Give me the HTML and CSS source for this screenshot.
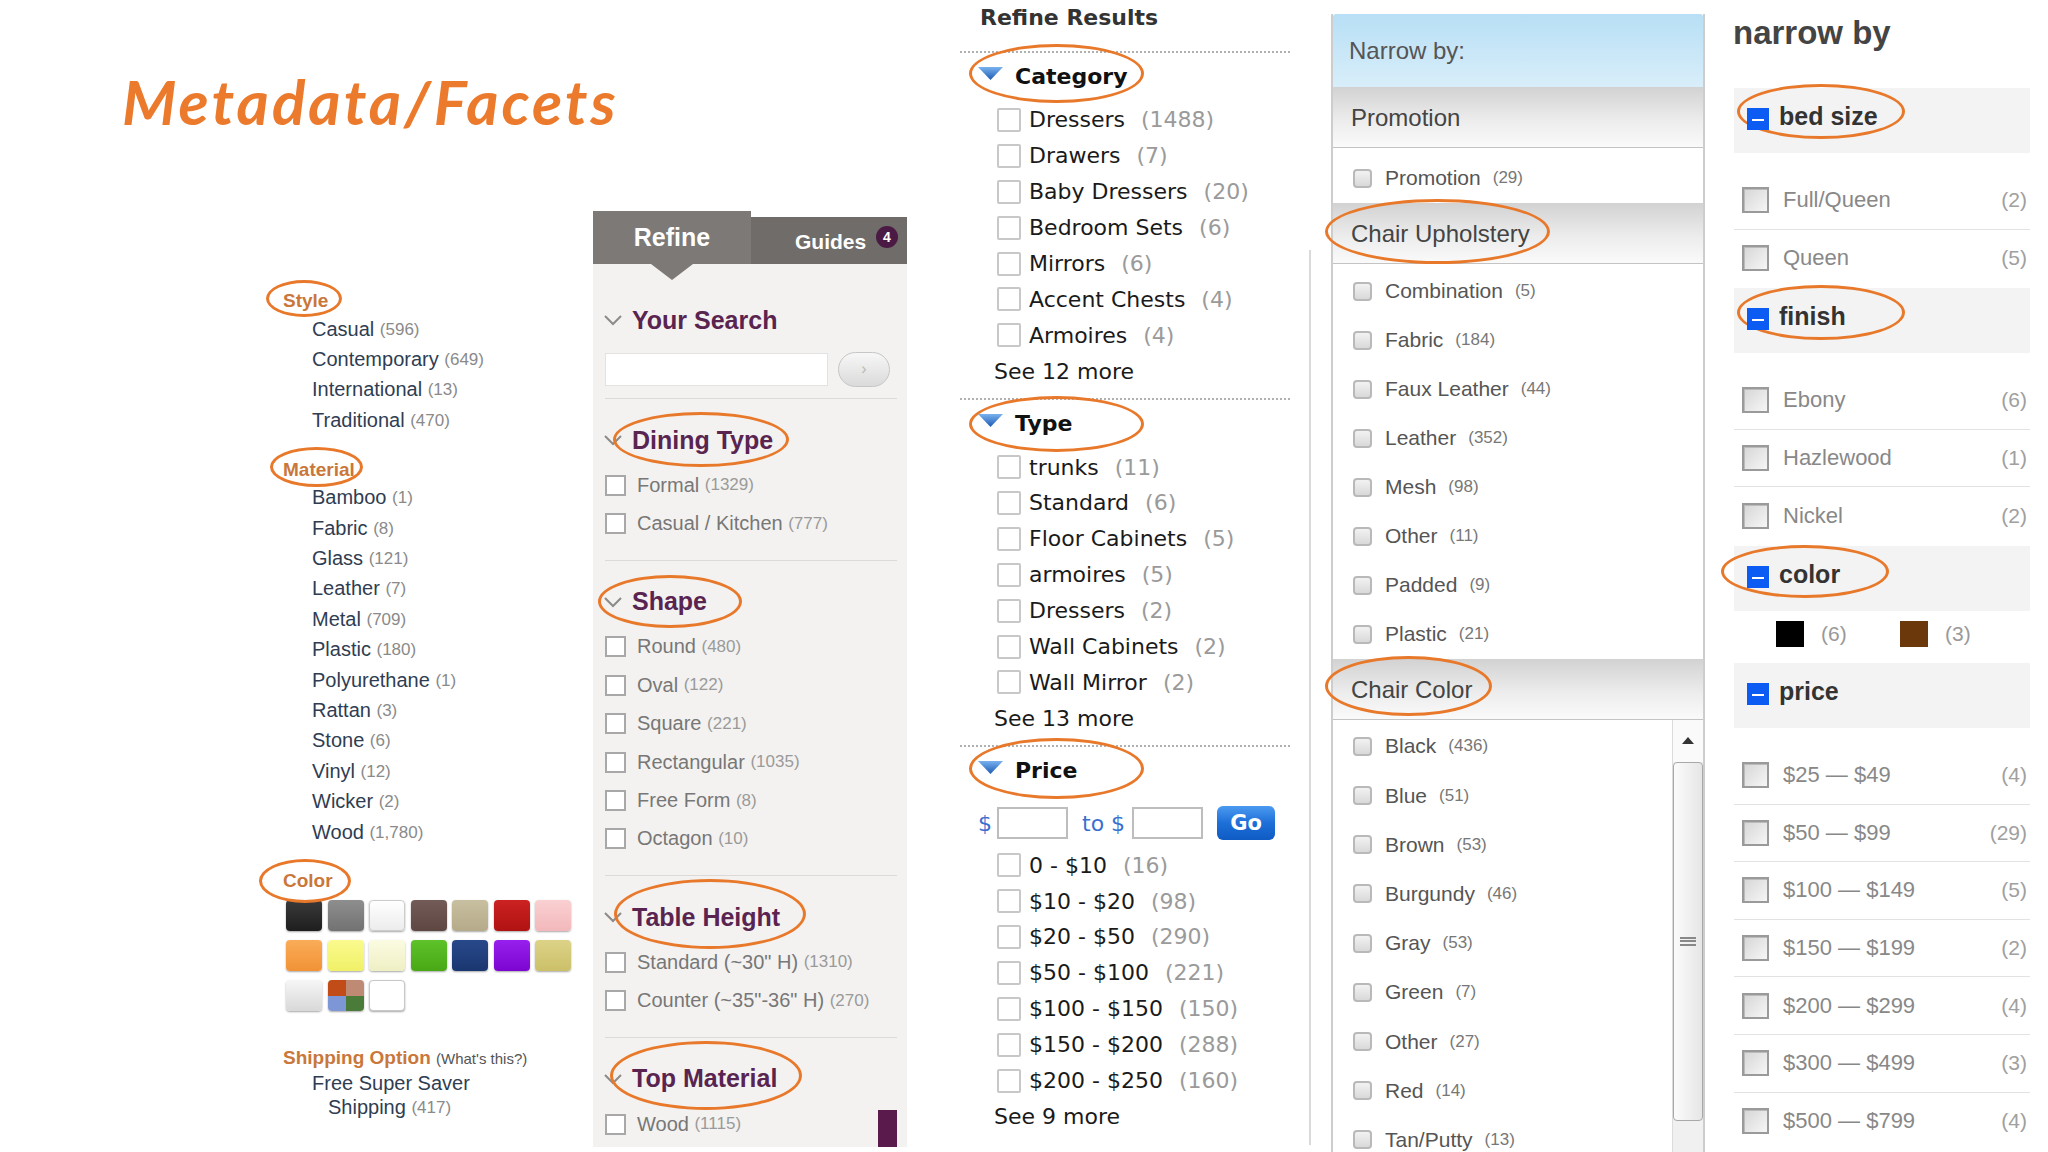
FILE: index.html
```html
<!DOCTYPE html>
<html>
<head>
<meta charset="utf-8">
<title>Metadata/Facets</title>
<link rel="stylesheet" href="styles.css">
</head>
<body>
<div class="slide">

  <!-- Column A: title + amazon style facets -->
  <div class="col-a">
    <h1 class="title">Metadata/Facets</h1>
    <div class="amz">
      <div class="amz-h"><span class="oval ov-style"></span>Style</div>
      <ul class="amz-list">
        <li>Casual&nbsp;<span class="n">(596)</span></li>
        <li>Contemporary&nbsp;<span class="n">(649)</span></li>
        <li>International&nbsp;<span class="n">(13)</span></li>
        <li>Traditional&nbsp;<span class="n">(470)</span></li>
      </ul>
      <div class="amz-h mat"><span class="oval ov-mat"></span>Material</div>
      <ul class="amz-list">
        <li>Bamboo&nbsp;<span class="n">(1)</span></li>
        <li>Fabric&nbsp;<span class="n">(8)</span></li>
        <li>Glass&nbsp;<span class="n">(121)</span></li>
        <li>Leather&nbsp;<span class="n">(7)</span></li>
        <li>Metal&nbsp;<span class="n">(709)</span></li>
        <li>Plastic&nbsp;<span class="n">(180)</span></li>
        <li>Polyurethane&nbsp;<span class="n">(1)</span></li>
        <li>Rattan&nbsp;<span class="n">(3)</span></li>
        <li>Stone&nbsp;<span class="n">(6)</span></li>
        <li>Vinyl&nbsp;<span class="n">(12)</span></li>
        <li>Wicker&nbsp;<span class="n">(2)</span></li>
        <li>Wood&nbsp;<span class="n">(1,780)</span></li>
      </ul>
      <div class="amz-h colr"><span class="oval ov-color"></span>Color</div>
      <div class="swatches">
        <span class="sw sw-black"></span>
        <span class="sw sw-gray"></span>
        <span class="sw sw-white"></span>
        <span class="sw sw-brown"></span>
        <span class="sw sw-beige"></span>
        <span class="sw sw-red"></span>
        <span class="sw sw-pink"></span>
        <span class="sw sw-orange"></span>
        <span class="sw sw-yellow"></span>
        <span class="sw sw-ivory"></span>
        <span class="sw sw-green"></span>
        <span class="sw sw-navy"></span>
        <span class="sw sw-purple"></span>
        <span class="sw sw-gold"></span>
        <span class="sw sw-silver"></span>
        <span class="sw sw-multi"><i class="q1"></i><i class="q2"></i><i class="q3"></i><i class="q4"></i></span>
        <span class="sw sw-plain"></span>
      </div>
      <div class="ship">Shipping Option <span class="ship-what">(What's this?)</span></div>
      <div class="ship-item">Free Super Saver</div>
      <div class="ship-item second">Shipping&nbsp;<span class="n">(417)</span></div>
    </div>
  </div>

  <!-- Column B: Refine / Guides panel -->
  <div class="col-b">
    <div class="tabs">
      <div class="tab-refine">Refine</div>
      <div class="tab-guides">Guides<span class="badge">4</span></div>
    </div>
    <div class="rf-body">
      <div class="rf-h"><svg class="chev" viewBox="0 0 20 12"><polyline points="2,2 10,10 18,2" fill="none" stroke="#8d8a88" stroke-width="2"/></svg>Your Search</div>
      <div class="rf-search"><span class="rf-input"></span><span class="rf-go">&#8250;</span></div>
      <div class="rf-div"></div>

      <div class="rf-h sec"><span class="oval ov-dining"></span><svg class="chev" viewBox="0 0 20 12"><polyline points="2,2 10,10 18,2" fill="none" stroke="#8d8a88" stroke-width="2"/></svg>Dining Type</div>
      <ul class="rf-list">
        <li><span class="rf-cb"></span>Formal <span class="rf-n">(1329)</span></li>
        <li><span class="rf-cb"></span>Casual / Kitchen <span class="rf-n">(777)</span></li>
      </ul>
      <div class="rf-div sep"></div>

      <div class="rf-h sec"><span class="oval ov-shape"></span><svg class="chev" viewBox="0 0 20 12"><polyline points="2,2 10,10 18,2" fill="none" stroke="#8d8a88" stroke-width="2"/></svg>Shape</div>
      <ul class="rf-list">
        <li><span class="rf-cb"></span>Round <span class="rf-n">(480)</span></li>
        <li><span class="rf-cb"></span>Oval <span class="rf-n">(122)</span></li>
        <li><span class="rf-cb"></span>Square <span class="rf-n">(221)</span></li>
        <li><span class="rf-cb"></span>Rectangular <span class="rf-n">(1035)</span></li>
        <li><span class="rf-cb"></span>Free Form <span class="rf-n">(8)</span></li>
        <li><span class="rf-cb"></span>Octagon <span class="rf-n">(10)</span></li>
      </ul>
      <div class="rf-div sep"></div>

      <div class="rf-h sec"><span class="oval ov-height"></span><svg class="chev" viewBox="0 0 20 12"><polyline points="2,2 10,10 18,2" fill="none" stroke="#8d8a88" stroke-width="2"/></svg>Table Height</div>
      <ul class="rf-list">
        <li><span class="rf-cb"></span>Standard (~30" H) <span class="rf-n">(1310)</span></li>
        <li><span class="rf-cb"></span>Counter (~35"-36" H) <span class="rf-n">(270)</span></li>
      </ul>
      <div class="rf-div sep"></div>

      <div class="rf-h sec"><span class="oval ov-top"></span><svg class="chev" viewBox="0 0 20 12"><polyline points="2,2 10,10 18,2" fill="none" stroke="#8d8a88" stroke-width="2"/></svg>Top Material</div>
      <ul class="rf-list">
        <li><span class="rf-cb"></span>Wood <span class="rf-n">(1115)</span></li>
      </ul>
      <span class="rf-scroll"></span>
    </div>
  </div>

  <!-- Column C: Refine Results -->
  <div class="col-c">
    <div class="rr-title">Refine Results</div>
    <div class="rr-dots first"></div>

    <div class="rr-h"><span class="oval ov-cat"></span><svg class="tri" viewBox="0 0 25 13"><defs><linearGradient id="tg1" x1="0" y1="0" x2="0" y2="1"><stop offset="0" stop-color="#79b2ee"/><stop offset="1" stop-color="#1c5ab4"/></linearGradient></defs><polygon points="0,0 25,0 12.5,13" fill="url(#tg1)"/></svg>Category</div>
    <ul class="rr-list">
      <li><span class="rr-cb"></span>Dressers<span class="rr-n">(1488)</span></li>
      <li><span class="rr-cb"></span>Drawers<span class="rr-n">(7)</span></li>
      <li><span class="rr-cb"></span>Baby Dressers<span class="rr-n">(20)</span></li>
      <li><span class="rr-cb"></span>Bedroom Sets<span class="rr-n">(6)</span></li>
      <li><span class="rr-cb"></span>Mirrors<span class="rr-n">(6)</span></li>
      <li><span class="rr-cb"></span>Accent Chests<span class="rr-n">(4)</span></li>
      <li><span class="rr-cb"></span>Armoires<span class="rr-n">(4)</span></li>
      <li class="rr-more">See 12 more</li>
    </ul>
    <div class="rr-dots"></div>

    <div class="rr-h"><span class="oval ov-type"></span><svg class="tri" viewBox="0 0 25 13"><defs><linearGradient id="tg2" x1="0" y1="0" x2="0" y2="1"><stop offset="0" stop-color="#79b2ee"/><stop offset="1" stop-color="#1c5ab4"/></linearGradient></defs><polygon points="0,0 25,0 12.5,13" fill="url(#tg2)"/></svg>Type</div>
    <ul class="rr-list">
      <li><span class="rr-cb"></span>trunks<span class="rr-n">(11)</span></li>
      <li><span class="rr-cb"></span>Standard<span class="rr-n">(6)</span></li>
      <li><span class="rr-cb"></span>Floor Cabinets<span class="rr-n">(5)</span></li>
      <li><span class="rr-cb"></span>armoires<span class="rr-n">(5)</span></li>
      <li><span class="rr-cb"></span>Dressers<span class="rr-n">(2)</span></li>
      <li><span class="rr-cb"></span>Wall Cabinets<span class="rr-n">(2)</span></li>
      <li><span class="rr-cb"></span>Wall Mirror<span class="rr-n">(2)</span></li>
      <li class="rr-more">See 13 more</li>
    </ul>
    <div class="rr-dots"></div>

    <div class="rr-h"><span class="oval ov-price"></span><svg class="tri" viewBox="0 0 25 13"><defs><linearGradient id="tg3" x1="0" y1="0" x2="0" y2="1"><stop offset="0" stop-color="#79b2ee"/><stop offset="1" stop-color="#1c5ab4"/></linearGradient></defs><polygon points="0,0 25,0 12.5,13" fill="url(#tg3)"/></svg>Price</div>
    <div class="rr-price">
      <span class="rr-dollar">$</span>
      <span class="rr-input"></span>
      <span class="rr-to">to $</span>
      <span class="rr-input"></span>
      <span class="rr-go">Go</span>
    </div>
    <ul class="rr-list price">
      <li><span class="rr-cb"></span>0 - $10<span class="rr-n">(16)</span></li>
      <li><span class="rr-cb"></span>$10 - $20<span class="rr-n">(98)</span></li>
      <li><span class="rr-cb"></span>$20 - $50<span class="rr-n">(290)</span></li>
      <li><span class="rr-cb"></span>$50 - $100<span class="rr-n">(221)</span></li>
      <li><span class="rr-cb"></span>$100 - $150<span class="rr-n">(150)</span></li>
      <li><span class="rr-cb"></span>$150 - $200<span class="rr-n">(288)</span></li>
      <li><span class="rr-cb"></span>$200 - $250<span class="rr-n">(160)</span></li>
      <li class="rr-more">See 9 more</li>
    </ul>
  </div>
  <div class="vline"></div>

  <!-- Column D: Narrow by panel -->
  <div class="col-d">
    <div class="nb-top">Narrow by:</div>
    <div class="nb-h">Promotion</div>
    <ul class="nb-list">
      <li><span class="nb-cb"></span>Promotion<span class="nb-n">(29)</span></li>
    </ul>
    <div class="nb-h"><span class="oval ov-uph"></span>Chair Upholstery</div>
    <ul class="nb-list uph">
      <li><span class="nb-cb"></span>Combination<span class="nb-n">(5)</span></li>
      <li><span class="nb-cb"></span>Fabric<span class="nb-n">(184)</span></li>
      <li><span class="nb-cb"></span>Faux Leather<span class="nb-n">(44)</span></li>
      <li><span class="nb-cb"></span>Leather<span class="nb-n">(352)</span></li>
      <li><span class="nb-cb"></span>Mesh<span class="nb-n">(98)</span></li>
      <li><span class="nb-cb"></span>Other<span class="nb-n">(11)</span></li>
      <li><span class="nb-cb"></span>Padded<span class="nb-n">(9)</span></li>
      <li><span class="nb-cb"></span>Plastic<span class="nb-n">(21)</span></li>
    </ul>
    <div class="nb-h"><span class="oval ov-ccolor"></span>Chair Color</div>
    <div class="nb-scrollarea">
      <ul class="nb-list scroll">
        <li><span class="nb-cb"></span>Black<span class="nb-n">(436)</span></li>
        <li><span class="nb-cb"></span>Blue<span class="nb-n">(51)</span></li>
        <li><span class="nb-cb"></span>Brown<span class="nb-n">(53)</span></li>
        <li><span class="nb-cb"></span>Burgundy<span class="nb-n">(46)</span></li>
        <li><span class="nb-cb"></span>Gray<span class="nb-n">(53)</span></li>
        <li><span class="nb-cb"></span>Green<span class="nb-n">(7)</span></li>
        <li><span class="nb-cb"></span>Other<span class="nb-n">(27)</span></li>
        <li><span class="nb-cb"></span>Red<span class="nb-n">(14)</span></li>
        <li><span class="nb-cb"></span>Tan/Putty<span class="nb-n">(13)</span></li>
      </ul>
      <div class="nb-bar">
        <div class="nb-up"><svg viewBox="0 0 12 7"><polygon points="0,7 12,7 6,0" fill="#333"/></svg></div>
        <div class="nb-thumb"><span class="grip"></span></div>
      </div>
    </div>
  </div>

  <!-- Column E: narrow by (sidebar) -->
  <div class="col-e">
    <div class="e-title">narrow by</div>

    <div class="e-h"><span class="oval ov-bed"></span><span class="minus"></span>bed size</div>
    <ul class="e-list">
      <li><span class="e-cb"></span>Full/Queen<span class="e-n">(2)</span></li>
      <li><span class="e-cb"></span>Queen<span class="e-n">(5)</span></li>
    </ul>

    <div class="e-h"><span class="oval ov-finish"></span><span class="minus"></span>finish</div>
    <ul class="e-list">
      <li><span class="e-cb"></span>Ebony<span class="e-n">(6)</span></li>
      <li><span class="e-cb"></span>Hazlewood<span class="e-n">(1)</span></li>
      <li><span class="e-cb"></span>Nickel<span class="e-n">(2)</span></li>
    </ul>

    <div class="e-h"><span class="oval ov-ecolor"></span><span class="minus"></span>color</div>
    <div class="e-colors">
      <span class="e-sw e-black"></span><span class="e-cn">(6)</span>
      <span class="e-sw e-brown"></span><span class="e-cn">(3)</span>
    </div>

    <div class="e-h"><span class="minus"></span>price</div>
    <ul class="e-list">
      <li><span class="e-cb"></span>$25 — $49<span class="e-n">(4)</span></li>
      <li><span class="e-cb"></span>$50 — $99<span class="e-n">(29)</span></li>
      <li><span class="e-cb"></span>$100 — $149<span class="e-n">(5)</span></li>
      <li><span class="e-cb"></span>$150 — $199<span class="e-n">(2)</span></li>
      <li><span class="e-cb"></span>$200 — $299<span class="e-n">(4)</span></li>
      <li><span class="e-cb"></span>$300 — $499<span class="e-n">(3)</span></li>
      <li><span class="e-cb"></span>$500 — $799<span class="e-n">(4)</span></li>
    </ul>
  </div>

</div>
</body>
</html>
```

FILE: styles.css
```css
* { box-sizing: border-box; margin: 0; padding: 0; }
html, body { width: 2048px; height: 1152px; overflow: hidden; background: #fff; }
body { font-family: "Liberation Sans", Arial, sans-serif; }
ul { list-style: none; }

.slide { display: flex; align-items: flex-start; height: 1152px; }

.oval {
  position: absolute;
  border: 3px solid #e8782a;
  border-radius: 50%;
  pointer-events: none;
}

/* ---------- Column A ---------- */
.col-a { width: 593px; flex: none; }
.title {
  margin: 72px 0 0 122px;
  font-family: Lato, "Open Sans", sans-serif;
  font-style: italic;
  font-weight: 700;
  font-size: 62px;
  line-height: 58px;
  letter-spacing: 3px;
  color: #ec7a2c;
  white-space: nowrap;
}
.amz { margin-top: 160px; padding-left: 283px; }
.amz-h {
  position: relative;
  font-weight: 700;
  font-size: 19px;
  line-height: 22px;
  color: #c9773a;
}
.amz-h.mat { margin-top: 23px; }
.amz-h.colr { margin-top: 23px; }
.ov-style { left: -17px; top: -10px; width: 76px; height: 37px; }
.ov-mat { left: -13px; top: -12px; width: 93px; height: 40px; }
.ov-color { left: -24px; top: -11px; width: 92px; height: 44px; }

.amz-list { padding-left: 29px; padding-top: 2px; }
.amz-list li {
  display: flex;
  align-items: center;
  height: 30.4px;
  font-size: 20px;
  color: #2f3d52;
  white-space: nowrap;
}
.amz .n { font-size: 17px; line-height: 1; color: #8a8a8a; }

.swatches {
  display: grid;
  grid-template-columns: repeat(7, 36px);
  grid-auto-rows: 31px;
  gap: 9px 5.5px;
  margin: 8px 0 0 3px;
}
.sw {
  display: block;
  border-radius: 4px;
  box-shadow: 0 1px 2px rgba(0,0,0,.35);
  overflow: hidden;
}
.sw-black  { background: linear-gradient(#3a3a3a, #1e1e1e); }
.sw-gray   { background: linear-gradient(#8e8e8e, #727272); }
.sw-white  { background: linear-gradient(#ffffff, #ececec); border: 1px solid #ccc; }
.sw-brown  { background: linear-gradient(#735b58, #5e4643); }
.sw-beige  { background: linear-gradient(#c8bfa0, #b5ab8a); }
.sw-red    { background: linear-gradient(#cc2222, #b01212); }
.sw-pink   { background: linear-gradient(#fad0d2, #f2b8bb); }
.sw-orange { background: linear-gradient(#f9ac58, #f29236); }
.sw-yellow { background: linear-gradient(#fafa8e, #f0f068); }
.sw-ivory  { background: linear-gradient(#fbfbe2, #efefc4); }
.sw-green  { background: linear-gradient(#5ec22a, #48a815); }
.sw-navy   { background: linear-gradient(#28498a, #1a3670); }
.sw-purple { background: linear-gradient(#9820ee, #7d05d0); }
.sw-gold   { background: linear-gradient(#ddd388, #cbbf68); }
.sw-silver { background: linear-gradient(#f6f6f6, #d8d8d8); }
.sw-plain  { background: #fff; border: 1px solid #c8c8c8; }
.sw-multi { display: grid; grid-template-columns: 1fr 1fr; grid-template-rows: 1fr 1fr; }
.sw-multi .q1 { background: #c14c17; }
.sw-multi .q2 { background: #bf8a73; }
.sw-multi .q3 { background: #7d97d6; }
.sw-multi .q4 { background: #4b7b38; }

.ship {
  margin-top: 36px;
  font-weight: 700;
  font-size: 19px;
  line-height: 22px;
  color: #c9773a;
  white-space: nowrap;
}
.ship-what { font-weight: 400; font-size: 15px; color: #555; }
.ship-item {
  display: flex;
  align-items: center;
  height: 24px;
  margin-top: 1px;
  padding-left: 29px;
  font-size: 20px;
  color: #2f3d52;
  white-space: nowrap;
}
.ship-item.second { margin-top: 0; padding-left: 45px; }

/* ---------- Column B ---------- */
.col-b { width: 314px; flex: none; margin-top: 211px; }
.tabs { display: flex; align-items: flex-end; height: 53px; }
.tab-refine {
  position: relative;
  width: 158px;
  height: 53px;
  background: #7c7976;
  color: #fff;
  font-weight: 700;
  font-size: 25px;
  line-height: 53px;
  text-align: center;
}
.tab-refine::after {
  content: "";
  position: absolute;
  left: 58px;
  top: 53px;
  border-left: 21px solid transparent;
  border-right: 21px solid transparent;
  border-top: 16px solid #7c7976;
  z-index: 2;
}
.tab-guides {
  position: relative;
  width: 156px;
  height: 47px;
  background: #6f6c69;
  color: #fff;
  font-weight: 700;
  font-size: 21px;
  line-height: 50px;
  padding-left: 44px;
}
.badge {
  position: absolute;
  left: 125px;
  top: 9px;
  width: 22px;
  height: 22px;
  border-radius: 50%;
  background: #4b1a44;
  color: #fff;
  font-size: 14px;
  line-height: 22px;
  text-align: center;
}
.rf-body {
  position: relative;
  height: 883px;
  background: #f3f2f0;
  padding: 41px 10px 0 10px;
}
.rf-h {
  position: relative;
  display: flex;
  align-items: center;
  height: 30px;
  font-weight: 700;
  font-size: 25px;
  color: #5a2450;
  white-space: nowrap;
}
.rf-h.sec { margin-top: 26px; }
.chev { width: 20px; height: 12px; margin-right: 9px; flex: none; }
.ov-dining { left: 10px; top: -13px; width: 176px; height: 55px; }
.ov-shape { left: -5px; top: -12px; width: 144px; height: 53px; }
.ov-height { left: 11px; top: -23px; width: 192px; height: 70px; }
.ov-top { left: 7px; top: -23px; width: 192px; height: 69px; }

.rf-search { display: flex; align-items: center; margin-top: 17px; padding-left: 2px; }
.rf-input { width: 223px; height: 33px; background: #fff; border: 1px solid #e4e2e0; }
.rf-go {
  width: 52px;
  height: 35px;
  margin-left: 10px;
  border-radius: 18px;
  border: 1px solid #c6c6c6;
  background: linear-gradient(#f7f7f7, #dadada);
  color: #b8b8b8;
  font-size: 16px;
  line-height: 32px;
  text-align: center;
}
.rf-div { height: 1px; background: #dcdad7; margin: 11px 0 0 2px; }
.rf-div.sep { margin-top: 17px; }
.rf-list { margin-top: 11px; }
.rf-list li {
  display: flex;
  align-items: center;
  height: 38.4px;
  padding-left: 2px;
  font-size: 20px;
  color: #777;
  white-space: pre;
}
.rf-cb {
  width: 21px;
  height: 21px;
  border: 2px solid #a8a8a8;
  background: #fff;
  margin-right: 11px;
  flex: none;
}
.rf-n { font-size: 17px; color: #9a9a9a; }
.rf-scroll {
  position: absolute;
  right: 10px;
  bottom: 0;
  width: 19px;
  height: 37px;
  background: #5a1a4c;
}

/* ---------- Column C ---------- */
.col-c {
  width: 330px;
  flex: none;
  margin-left: 53px;
  font-family: "DejaVu Sans", Verdana, sans-serif;
}
.rr-title {
  padding: 3px 0 0 20px;
  font-weight: 700;
  font-size: 22px;
  line-height: 30px;
  color: #333;
}
.rr-dots { border-top: 2px dotted #b0b0b0; margin-top: 9px; }
.rr-dots.first { margin-top: 18px; }
.rr-h {
  position: relative;
  display: flex;
  align-items: center;
  height: 30px;
  margin-top: 8px;
  padding-left: 18px;
  font-weight: 700;
  font-size: 22px;
  color: #111;
}
.tri { width: 25px; height: 13px; margin-right: 12px; flex: none; margin-top: -6px; }
.ov-cat { left: 9px; top: -17px; width: 175px; height: 59px; }
.ov-type { left: 9px; top: -12px; width: 175px; height: 56px; }
.ov-price { left: 9px; top: -17px; width: 175px; height: 61px; }

.rr-list { margin-top: 11px; }
.rr-list.price { margin-top: 7px; }
.rr-list li {
  display: flex;
  align-items: center;
  height: 35.9px;
  padding-left: 37px;
  font-size: 22px;
  color: #1a1a1a;
  white-space: nowrap;
}
.rr-list li.rr-more { padding-left: 34px; }
.rr-cb {
  width: 24px;
  height: 24px;
  border: 2px solid #c8c8c8;
  border-radius: 2px;
  background: #fff;
  margin-right: 8px;
  flex: none;
}
.rr-n { color: #9a9a9a; margin-left: 16px; }
.rr-price {
  display: flex;
  align-items: center;
  height: 34px;
  margin-top: 21px;
  padding-left: 18px;
  font-size: 22px;
  color: #3a6fd0;
}
.rr-dollar { margin-right: 5px; }
.rr-input { width: 71px; height: 32px; border: 2px solid #bdbdbd; background: #fff; }
.rr-to { margin: 0 7px 0 14px; }
.rr-go {
  width: 58px;
  height: 34px;
  margin-left: 14px;
  border-radius: 6px;
  background: linear-gradient(#4b9af0 0%, #1d6fd8 50%, #0f5bc4 100%);
  color: #fff;
  font-weight: 700;
  font-size: 21px;
  line-height: 34px;
  text-align: center;
}
.vline {
  flex: none;
  width: 2px;
  height: 895px;
  margin: 250px 0 0 19px;
  background: #dadada;
}

/* ---------- Column D ---------- */
.col-d {
  width: 374px;
  height: 1138px;
  flex: none;
  margin: 14px 0 0 20px;
  border-left: 2px solid #cdcdcd;
  border-right: 2px solid #cdcdcd;
  display: flex;
  flex-direction: column;
}
.nb-top {
  height: 73px;
  padding-left: 16px;
  background: linear-gradient(#b7dff5, #d9eefa);
  border-radius: 3px 3px 0 0;
  font-size: 24px;
  line-height: 73px;
  color: #555;
  flex: none;
}
.nb-h {
  position: relative;
  height: 61px;
  padding-left: 18px;
  background: linear-gradient(#d2d2d2, #ececec 55%, #fafafa);
  border-bottom: 1px solid #c4c4c4;
  font-size: 24px;
  line-height: 62px;
  color: #444;
  white-space: nowrap;
  flex: none;
}
.ov-uph { left: -8px; top: -4px; width: 225px; height: 65px; }
.ov-ccolor { left: -8px; top: -3px; width: 167px; height: 60px; }
.nb-list { background: #fff; padding-top: 6px; flex: none; }
.nb-list li {
  display: flex;
  align-items: center;
  height: 48.8px;
  padding-left: 20px;
  font-size: 21px;
  color: #555;
  white-space: nowrap;
}
.nb-list.uph { padding-top: 3px; }
.nb-list.uph li { height: 49px; }
.nb-list.scroll { padding-top: 2px; }
.nb-list.scroll li { height: 49.2px; }
.nb-cb {
  width: 19px;
  height: 19px;
  border: 2px solid #b9b9b9;
  border-radius: 4px;
  background: linear-gradient(#f2f2f2, #d9d9d9);
  margin-right: 13px;
  flex: none;
}
.nb-n { font-size: 17px; color: #777; margin-left: 12px; }
.nb-scrollarea { flex: 1; display: flex; overflow: hidden; background: #fff; }
.nb-list.scroll { flex: 1; }
.nb-bar {
  width: 31px;
  flex: none;
  background: #f0f0f0;
  border-left: 1px solid #dcdcdc;
  display: flex;
  flex-direction: column;
}
.nb-up {
  height: 42px;
  display: flex;
  align-items: center;
  justify-content: center;
  background: #fafafa;
}
.nb-up svg { width: 12px; height: 7px; }
.nb-thumb {
  height: 359px;
  border: 1px solid #a8a8a8;
  border-radius: 4px;
  background: linear-gradient(90deg, #fbfbfb, #e6e6e6);
  display: flex;
  align-items: center;
  justify-content: center;
}
.grip {
  width: 16px;
  height: 9px;
  border-top: 2px solid #888;
  border-bottom: 2px solid #888;
  position: relative;
}
.grip::after {
  content: "";
  position: absolute;
  left: 0;
  right: 0;
  top: 1.5px;
  border-top: 2px solid #888;
}

/* ---------- Column E ---------- */
.col-e { width: 297px; flex: none; margin-left: 28px; }
.e-title {
  margin-top: 13px;
  font-weight: 700;
  font-size: 33px;
  line-height: 40px;
  color: #444;
  white-space: nowrap;
}
.e-h {
  position: relative;
  display: flex;
  align-items: center;
  height: 65px;
  margin-left: 1px;
  padding: 0 0 8px 13px;
  background: #f3f3f3;
  font-weight: 700;
  font-size: 25px;
  color: #333;
}
.col-e .e-title + .e-h { margin-top: 35px; }
.minus {
  position: relative;
  width: 22px;
  height: 22px;
  background: #0c5cf4;
  margin: 5px 10px 0 0;
  flex: none;
}
.minus::after {
  content: "";
  position: absolute;
  left: 5px;
  right: 5px;
  top: 11px;
  height: 2px;
  background: #fff;
}
.ov-bed { left: 3px; top: -4px; width: 168px; height: 55px; }
.ov-finish { left: 3px; top: -3px; width: 168px; height: 55px; }
.ov-ecolor { left: -13px; top: -1px; width: 168px; height: 53px; }
.e-list { padding: 19px 0 1px; }
.e-list li {
  display: flex;
  align-items: center;
  height: 57.6px;
  margin-left: 1px;
  padding-left: 8px;
  padding-right: 3px;
  border-bottom: 1px solid #e2e2e2;
  font-size: 22px;
  color: #888;
  white-space: nowrap;
}
.e-list li:last-child { border-bottom: none; }
.e-cb {
  width: 27px;
  height: 26px;
  border: 2px solid #9a9a9a;
  background: linear-gradient(135deg, #d6d6d6, #f6f6f6);
  box-shadow: inset 1px 1px 0 #bbb;
  margin-right: 14px;
  flex: none;
}
.e-n { margin-left: auto; font-size: 21px; color: #a0a0a0; }
.e-colors {
  display: flex;
  align-items: flex-start;
  height: 52px;
  padding: 10px 0 16px 43px;
}
.e-sw { width: 28px; height: 26px; flex: none; }
.e-black { background: #000; }
.e-brown { background: #6b380c; }
.e-cn { font-size: 21px; line-height: 26px; color: #999; margin-left: 17px; width: 79px; }
```
